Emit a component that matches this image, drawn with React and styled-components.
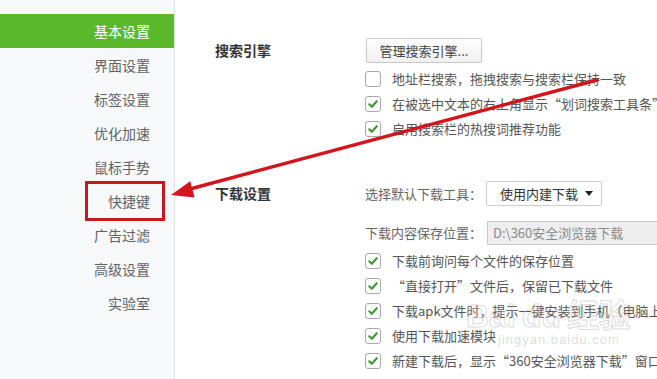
import styled, { createGlobalStyle } from 'styled-components'

const GlobalStyle = createGlobalStyle`
    html, body {
        margin: 0;
        padding: 0;
        background: #ffffff;
    }
    body {
        font-family: "Noto Sans CJK SC", "Liberation Sans", sans-serif;
        -webkit-font-smoothing: antialiased;
    }
`

const menu = ['基本设置', '界面设置', '标签设置', '优化加速', '鼠标手势', '快捷键', '广告过滤', '高级设置', '实验室']

const searchOptions = [
    { text: '地址栏搜索，拖拽搜索与搜索栏保持一致', checked: false },
    { text: '在被选中文本的右上角显示“划词搜索工具条”', checked: true },
    { text: '启用搜索栏的热搜词推荐功能', checked: true },
]

const downloadOptions = [
    '下载前询问每个文件的保存位置',
    '“直接打开”文件后，保留已下载文件',
    '下载apk文件时，提示一键安装到手机（电脑上',
    '使用下载加速模块',
    '新建下载后，显示“360安全浏览器下载”窗口',
]

const Check = ({ checked }) => (
    <Box>
        {checked && (
            <svg width="12" height="12" viewBox="0 0 12 12">
                <path d="M2.2 6.3 L4.8 8.8 L9.8 3.2" fill="none" stroke="#3c9a2c" strokeWidth="2.1" strokeLinecap="round" strokeLinejoin="round" />
            </svg>
        )}
    </Box>
)

const App = () => {
    return (
        <Page>
            <GlobalStyle />
            <Sidebar>
                {menu.map((m, i) => (
                    <MenuItem key={m} active={i === 0}>
                        <MenuLabel marked={m === '快捷键'}>{m}</MenuLabel>
                    </MenuItem>
                ))}
            </Sidebar>
            <Main>
                <Section>
                    <SectionTitle>搜索引擎</SectionTitle>
                    <Content>
                        <Button>管理搜索引擎...</Button>
                        <Options>
                            {searchOptions.map(o => (
                                <Option key={o.text}>
                                    <Check checked={o.checked} />
                                    <OptionText>{o.text}</OptionText>
                                </Option>
                            ))}
                        </Options>
                    </Content>
                </Section>
                <Section download>
                    <SectionTitle>下载设置</SectionTitle>
                    <Content>
                        <Field>
                            <FieldLabel>选择默认下载工具：</FieldLabel>
                            <Select>
                                使用内建下载
                                <Caret />
                            </Select>
                        </Field>
                        <Field path>
                            <FieldLabel>下载内容保存位置：</FieldLabel>
                            <PathInput>D:\360安全浏览器下载</PathInput>
                        </Field>
                        <Options>
                            {downloadOptions.map(t => (
                                <Option key={t}>
                                    <Check checked />
                                    <OptionText>{t}</OptionText>
                                </Option>
                            ))}
                        </Options>
                    </Content>
                </Section>
            </Main>
            <Watermark>
                Bai<Paw>du</Paw>经验
                <WatermarkSub>jingyan.baidu.com</WatermarkSub>
            </Watermark>
            <Arrow width="657" height="379" viewBox="0 0 657 379">
                <line x1="597" y1="80" x2="190" y2="189" stroke="#d2141c" strokeWidth="3.4" strokeLinecap="round" />
                <polygon points="171,195 190.2,181.2 194.6,197.4" fill="#d2141c" />
            </Arrow>
        </Page>
    )
}

const Page = styled.div`
    position: relative;
    display: flex;
    width: 657px;
    height: 379px;
    overflow: hidden;
    background: #ffffff;
`

const Sidebar = styled.div`
    width: 174px;
    flex-shrink: 0;
    padding-top: 14px;
    background: #f6f8f9;
    border-right: 1px solid #dfe2e5;
`

const MenuItem = styled.div`
    height: 34px;
    display: flex;
    align-items: center;
    justify-content: flex-end;
    padding-right: 24px;
    font-size: 14px;
    color: ${p => (p.active ? '#ffffff' : '#5f6368')};
    background: ${p => (p.active ? '#5cb82b' : 'transparent')};
`

const MenuLabel = styled.span`
    position: relative;

    &::after {
        content: '';
        display: ${p => (p.marked ? 'block' : 'none')};
        position: absolute;
        left: -23px;
        right: -15px;
        top: -10px;
        bottom: -10px;
        border: 3px solid #c8161d;
    }
`

const Main = styled.div`
    flex: 1;
    padding: 38px 0 0 40px;
`

const Section = styled.div`
    display: flex;
    margin-top: ${p => (p.download ? '40px' : '0')};
`

const SectionTitle = styled.div`
    width: 150px;
    flex-shrink: 0;
    font-size: 14px;
    font-weight: bold;
    color: #333333;
    line-height: 25px;
    margin-top: ${p => (p.download ? '0' : '0')};
`

const Content = styled.div`
    display: flex;
    flex-direction: column;
    align-items: flex-start;
    flex: 1;
    min-width: 0;
`

const Button = styled.div`
    box-sizing: border-box;
    height: 25px;
    width: 116px;
    margin-left: 1px;
    display: flex;
    align-items: center;
    justify-content: center;
    font-size: 13px;
    color: #444444;
    border: 1px solid #c9c9c9;
    border-radius: 2px;
    background: linear-gradient(#fdfdfd, #f1f1f1);
    margin-bottom: 3px;
`

const Options = styled.div`
    display: flex;
    flex-direction: column;
`

const Option = styled.div`
    height: 25px;
    display: flex;
    align-items: center;
    gap: 11px;
    white-space: nowrap;
`

const Box = styled.div`
    box-sizing: border-box;
    width: 16px;
    height: 16px;
    flex-shrink: 0;
    border: 1px solid #a9a9a9;
    border-radius: 3px;
    background: #ffffff;
    display: flex;
    align-items: center;
    justify-content: center;
`

const OptionText = styled.span`
    font-size: 13px;
    color: #555555;
`

const Field = styled.div`
    display: flex;
    align-items: center;
    height: 25px;
    margin-bottom: ${p => (p.path ? '3px' : '14px')};
    white-space: nowrap;
`

const FieldLabel = styled.span`
    font-size: 13px;
    color: #666666;
    width: 121px;
`

const Select = styled.div`
    box-sizing: border-box;
    width: 116px;
    height: 25px;
    display: flex;
    align-items: center;
    justify-content: space-between;
    padding: 0 8px 0 13px;
    font-size: 13px;
    color: #333333;
    border: 1px solid #cccccc;
    border-radius: 2px;
    background: #ffffff;
`

const Caret = styled.span`
    width: 0;
    height: 0;
    border-left: 4px solid transparent;
    border-right: 4px solid transparent;
    border-top: 5px solid #222222;
`

const PathInput = styled.div`
    box-sizing: border-box;
    width: 190px;
    height: 24px;
    margin-left: 1px;
    display: flex;
    align-items: center;
    padding-left: 5px;
    font-size: 13px;
    color: #8a8a8a;
    background: #eeeeee;
    border: 1px solid #c8c8c8;
`

const Watermark = styled.div`
    position: absolute;
    left: 466px;
    top: 299px;
    font-family: "Liberation Sans", "Noto Sans CJK SC", sans-serif;
    font-size: 32px;
    font-weight: bold;
    line-height: 34px;
    color: transparent;
    -webkit-text-stroke: 1px rgba(190, 190, 190, 0.55);
    pointer-events: none;
`

const Paw = styled.span`
    margin: 0 6px;
`

const WatermarkSub = styled.div`
    font-size: 13px;
    line-height: 14px;
    font-weight: normal;
    letter-spacing: 1px;
    margin-left: 32px;
    -webkit-text-stroke: 0;
    color: rgba(180, 180, 180, 0.45);
`

const Arrow = styled.svg`
    position: absolute;
    left: 0;
    top: 0;
    pointer-events: none;
`

export default App
